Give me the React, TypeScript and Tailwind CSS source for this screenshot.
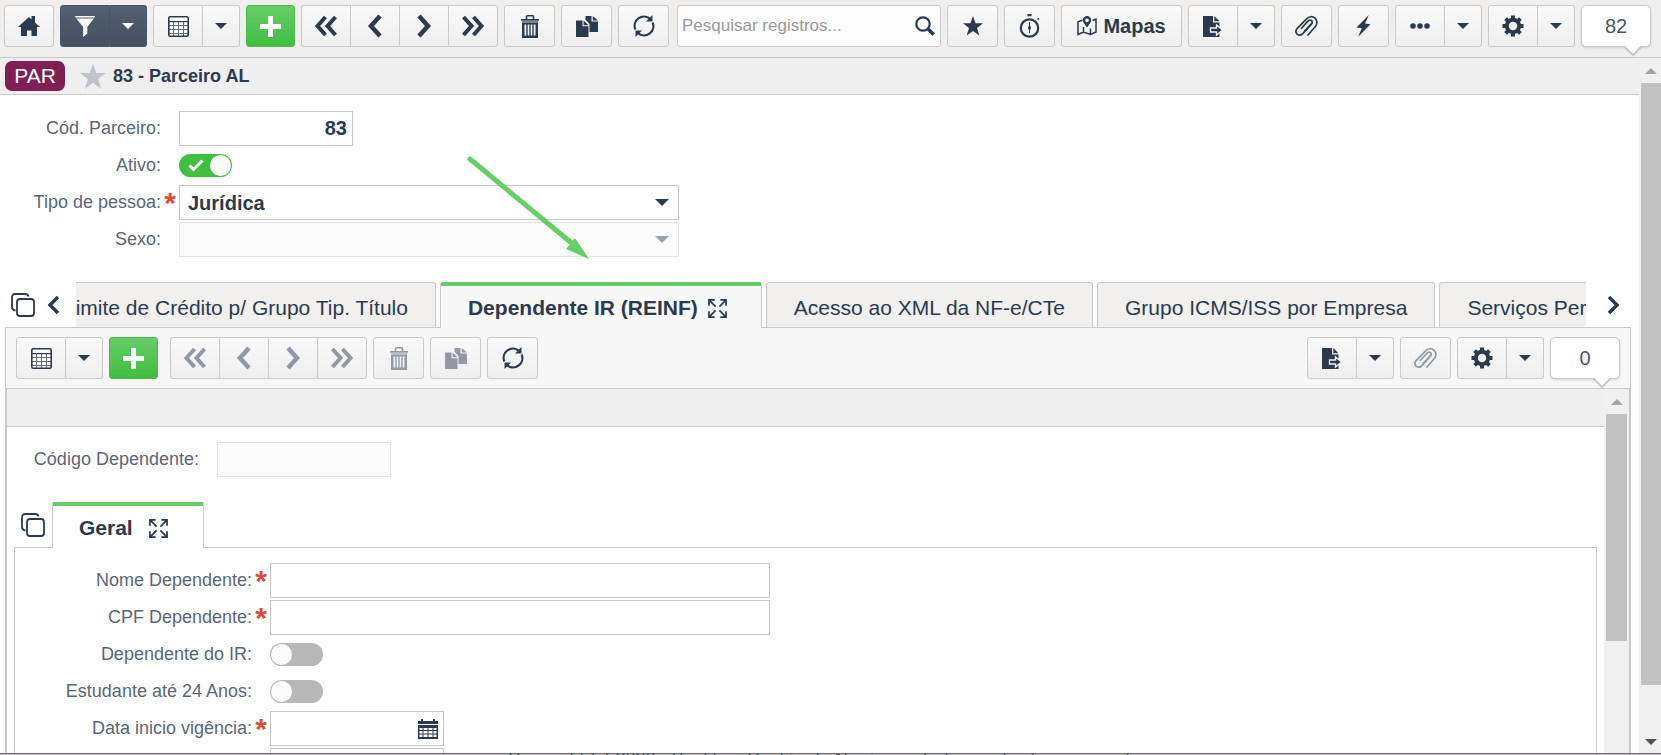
import React, {useState} from 'react';
import clsx from 'clsx';

type Children = {children?: React.ReactNode};

const buttonLook = 'flex h-[42px] items-center justify-center border border-[#c9c9c9] bg-linear-to-b from-[#f9f9f9] to-[#efefef] text-[#2c3a4d] disabled:text-[#9299a5]';

const Svg = ({w, h, children}: {w: number; h: number} & Children) => (
    <svg width={w} height={h} viewBox={`0 0 ${w} ${h}`} fill="currentColor" aria-hidden="true" className="shrink-0">
        {children}
    </svg>
);

const HomeIcon = () => (
    <Svg w={22} h={20}>
        <path d="M11 1l2.500 2.400V0H17v6.500l5 4.500h-3v9h-5.500v-5.500H9V20H3v-9H0z"/>
    </Svg>
);

const FilterIcon = () => (
    <Svg w={20} h={21}>
        <path d="M0 0h20l-.7 1.500H.7zM1.200 2.500h17.600L12.300 11v6.500L8.200 21V11z"/>
    </Svg>
);

const CaretIcon = () => (
    <Svg w={12} h={6}>
        <path d="M0 0h12L6 6z"/>
    </Svg>
);

const GridIcon = () => (
    <Svg w={21} h={21}>
        <rect x=".8" y=".8" width="19.400" height="19.400" rx="1.500" fill="#fff" stroke="currentColor" strokeWidth="1.600"/>
        <path d="M1 5h19v1.200H1z"/>
        <path d="M1 9h19v1H1zM1 13h19v1H1zM1 17h19v1H1zM5 6h1v14H5zM10 6h1v14h-1zM15 6h1v14h-1z" opacity=".75"/>
    </Svg>
);

const PlusIcon = () => (
    <Svg w={21} h={21}>
        <path d="M8 0h5v8h8v5h-8v8H8v-8H0V8h8z"/>
    </Svg>
);

const ChevronIcon = ({right}: {right?: boolean}) => (
    <Svg w={16} h={24}>
        <path d={right ? 'M3 2l9 10-9 10' : 'M13 2L4 12l9 10'} fill="none" stroke="currentColor" strokeWidth="4.500"/>
    </Svg>
);

const DoubleChevronIcon = ({right}: {right?: boolean}) => (
    <Svg w={24} h={22}>
        <path
            d={right ? 'M2.500 2l8 9-8 9M12.500 2l8 9-8 9' : 'M11.500 2l-8 9 8 9M21.500 2l-8 9 8 9'}
            fill="none"
            stroke="currentColor"
            strokeWidth="4"
        />
    </Svg>
);

const TabChevronIcon = ({right}: {right?: boolean}) => (
    <Svg w={12} h={20}>
        <path d={right ? 'M2 2l8 8-8 8' : 'M10 2l-8 8 8 8'} fill="none" stroke="currentColor" strokeWidth="3.500"/>
    </Svg>
);

const TrashIcon = () => (
    <Svg w={18} h={23}>
        <path d="M5.500 4V1.500Q5.500.8 6.200.8h5.600q.7 0 .7.7V4" fill="none" stroke="currentColor" strokeWidth="1.600"/>
        <path d="M0 4h18v1.700H0z"/>
        <path d="M1 6h16v2H1z" opacity=".6"/>
        <path fillRule="evenodd" d="M1 8h16v15H1zM3.500 9.500v11h1.800v-11zM6.700 9.500v11h1.600v-11zM9.700 9.500v11h1.600v-11zM12.700 9.500v11h1.800v-11z"/>
    </Svg>
);

const CopyIcon = () => (
    <Svg w={22} h={21}>
        <path d="M9.500 0h6v5.500H22v10.500h-8.500V8L9.500 3.800zM16.800 0L22 4.400h-5.200z"/>
        <path d="M0 4.500h6.500v5.800h6V21H0zM7.600 4.500l4.900 4.700H7.600z"/>
    </Svg>
);

const RefreshIcon = () => (
    <Svg w={22} h={22}>
        <path d="M2.400 14.500A9.300 9.300 0 0 1 17 3.800M19.600 7.500A9.300 9.300 0 0 1 5 18.200" fill="none" stroke="currentColor" strokeWidth="2.200"/>
        <path d="M19.500 0v6.500H13zM2.500 22v-6.500H9z"/>
    </Svg>
);

const SearchIcon = () => (
    <Svg w={20} h={20}>
        <circle cx="8" cy="8" r="6.700" fill="none" stroke="currentColor" strokeWidth="2.200"/>
        <path d="M12.500 12.500l6.300 6" stroke="currentColor" strokeWidth="3.600"/>
    </Svg>
);

const StarIcon = () => (
    <Svg w={20} h={20}>
        <path d="M10 0l2.600 7.300H20l-6 4.600 2.300 7.600-6.300-4.600-6.300 4.600L6 11.900 0 7.300h7.400z"/>
    </Svg>
);

const TimerIcon = () => (
    <Svg w={22} h={24}>
        <circle cx="10.500" cy="14" r="8.700" fill="none" stroke="currentColor" strokeWidth="2.200"/>
        <path d="M8.500 0h4v2.200h-4zM18.500 4h1.700v1.700h-1.700zM10 8h1v4h-1zM10 16h1v3h-1z"/>
        <path d="M10.500 10l1.600 4-1.600 3-1.600-3z"/>
    </Svg>
);

const MapIcon = () => (
    <Svg w={20} h={20}>
        <path d="M5.500 4.200L1 5.800V18.500L6.500 16l7 2.500L19 16V3.200l-3.500 1.300M6.500 11v5M13.500 12.500v6" fill="none" stroke="currentColor" strokeWidth="1.500"/>
        <path fillRule="evenodd" d="M10 0a4.200 4.200 0 0 1 4.200 4.200c0 2.300-2.200 4.100-4.200 7.300-2-3.200-4.200-5-4.200-7.300A4.200 4.200 0 0 1 10 0zm0 2.400a1.900 1.900 0 1 0 0 3.800 1.900 1.900 0 0 0 0-3.800z"/>
    </Svg>
);

const ExportIcon = () => (
    <Svg w={20} h={21}>
        <path d="M0 0h10v6.500h6.500V21H0zM11.300 0l5.200 5.300h-5.200z"/>
        <path d="M7.500 12h6V9l6 5-6 5v-3h-6z" stroke="#f3f3f3" strokeWidth="1.300"/>
    </Svg>
);

const ClipIcon = () => (
    <svg width="23" height="22" viewBox="0 0 23 22" fill="none" stroke="currentColor" strokeWidth="1.700" strokeLinecap="round" aria-hidden="true">
        <path d="M13 20l7.200-8.200c2.300-2.700 2.100-6.400-.2-8.600-2.400-2.200-6.100-1.900-8.400.6L2.300 13.300c-1.700 1.900-1.600 4.300-.1 5.800 1.600 1.400 4 1.200 5.600-.5l8.600-9.400c1-1.200 1-2.600.1-3.500-1-.9-2.500-.8-3.500.4L6.500 13.300"/>
        <path d="M9.500 16l7-7.500"/>
    </svg>
);

const BoltIcon = () => (
    <Svg w={15} h={22}>
        <path d="M12.800 0L.5 12.500l5.300.8L2 22l12.500-12.800-5.500-.8z"/>
    </Svg>
);

const DotsIcon = () => (
    <Svg w={20} h={6}>
        <circle cx="3" cy="3" r="2.800"/>
        <circle cx="10" cy="3" r="2.800"/>
        <circle cx="17" cy="3" r="2.800"/>
    </Svg>
);

const GearIcon = () => (
    <Svg w={22} h={22}>
        <circle cx="11" cy="11" r="6.200" fill="none" stroke="currentColor" strokeWidth="4"/>
        <path
            d="M11 .5v4M11 17.500v4M.5 11h4M17.500 11h4M3.600 3.600l2.800 2.800M15.600 15.600l2.800 2.800M3.600 18.400l2.800-2.800M15.600 6.400l2.800-2.800"
            stroke="currentColor"
            strokeWidth="4"
        />
    </Svg>
);

const LayersIcon = () => (
    <svg width="24" height="24" viewBox="0 0 24 24" fill="none" stroke="currentColor" strokeWidth="1.800" aria-hidden="true" className="shrink-0">
        <rect x="6" y="6" width="17" height="17" rx="3"/>
        <path d="M4.500 17.500Q1 17 1 14V4.500Q1 1 4.500 1H14q3 0 3.500 2.500"/>
    </svg>
);

const ExpandIcon = () => (
    <svg width="19" height="19" viewBox="0 0 20 20" fill="none" stroke="currentColor" strokeWidth="1.800" aria-hidden="true" className="shrink-0">
        <path d="M1 7V1h6M13 1h6v6M19 13v6h-6M7 19H1v-6M1 1l7 7M19 1l-7 7M19 19l-7-7M1 19l7-7"/>
    </svg>
);

const CalendarIcon = () => (
    <Svg w={20} h={20}>
        <path d="M3 0h2v2h10V0h2v2h3v3H0V2h3z"/>
        <path fillRule="evenodd" d="M0 6h20v14H0zM1.500 9v2h3V9zM5.500 9v2h4V9zM10.500 9v2h4V9zM15.500 9v2h3V9zM1.500 12v2.500h3V12zM5.500 12v2.500h4V12zM10.500 12v2.500h4V12zM15.500 12v2.500h3V12zM1.500 15.500V18h3v-2.500zM5.500 15.500V18h4v-2.500zM10.500 15.500V18h4v-2.500zM15.500 15.500V18h3v-2.500z"/>
    </Svg>
);

const ToolButton = ({label, disabled, children}: {label: string; disabled?: boolean} & Children) => (
    <button type="button" aria-label={label} disabled={disabled} className={clsx(buttonLook, 'w-[51px] shrink-0 rounded-[3px]')}>
        {children}
    </button>
);

const AddButton = () => (
    <button
        type="button"
        aria-label="Adicionar"
        className="flex h-[42px] w-[49px] shrink-0 items-center justify-center rounded-[3px] border border-[#4dbb4d] bg-linear-to-b from-[#66cc66] to-[#40be40] text-white"
    >
        <PlusIcon/>
    </button>
);

const SplitButton = ({label, dark, children}: {label: string; dark?: boolean} & Children) => {
    const look = dark
        ? 'flex h-[42px] items-center justify-center border border-[#4a5565] bg-linear-to-b from-[#536073] to-[#455060] text-white'
        : buttonLook;

    return (
        <div className="flex shrink-0">
            <button type="button" aria-label={label} className={clsx(look, 'w-[50px] rounded-l-[3px]')}>
                {children}
            </button>
            <button type="button" aria-label={label + ' (opções)'} className={clsx(look, 'w-[37px] rounded-r-[3px] border-l-0')}>
                <CaretIcon/>
            </button>
        </div>
    );
};

const Pager = ({disabled}: {disabled?: boolean}) => {
    const cell = 'w-[49px] border-r-0';

    return (
        <div className="flex shrink-0">
            <button type="button" aria-label="Primeiro" disabled={disabled} className={clsx(buttonLook, cell, 'rounded-l-[3px]')}>
                <DoubleChevronIcon/>
            </button>
            <button type="button" aria-label="Anterior" disabled={disabled} className={clsx(buttonLook, cell)}>
                <ChevronIcon/>
            </button>
            <button type="button" aria-label="Próximo" disabled={disabled} className={clsx(buttonLook, cell)}>
                <ChevronIcon right/>
            </button>
            <button type="button" aria-label="Último" disabled={disabled} className={clsx(buttonLook, 'w-[50px] rounded-r-[3px]')}>
                <DoubleChevronIcon right/>
            </button>
        </div>
    );
};

const Counter = ({value}: {value: number}) => (
    <div className="relative flex h-[42px] w-[70px] shrink-0 items-center justify-center rounded-[5px] border border-[#c9c9c9] bg-white text-[20px] text-[#4a5669] shadow-sm">
        {value}
        <svg width="18" height="11" viewBox="0 0 18 11" className="absolute top-full right-2" aria-hidden="true">
            <path d="M0 0l9 9 9-9" fill="#fff" stroke="#c9c9c9" strokeWidth="2"/>
            <path d="M1 -1h16L9 7.500z" fill="#fff"/>
        </svg>
    </div>
);

const Field = ({id, label, required, wide, children}: {id: string; label: string; required?: boolean; wide: string} & Children) => (
    <div className="flex h-[35px] items-center">
        <label htmlFor={id} className={clsx(wide, 'shrink-0 text-right text-[18px] text-[#5b6678]')}>{label}</label>
        <span className="flex h-[35px] w-[18px] shrink-0 justify-center pt-1 text-[30px] leading-[28px] font-bold text-[#dd4b39]" aria-hidden="true">
            {required && '*'}
        </span>
        {children}
    </div>
);

const inputLook = 'h-[35px] border border-[#c8c8c8] bg-white px-[5px] text-[20px] font-bold text-[#2c3a4d] outline-none disabled:border-[#e3e3e3] disabled:bg-[#fbfbfb]';

const SelectBox = ({id, value, disabled}: {id: string; value: string; disabled?: boolean}) => (
    <div className={clsx('relative w-[500px]', disabled ? 'text-[#9aa1ad]' : 'text-[#2c3a4d]')}>
        <select id={id} disabled={disabled} defaultValue={value} className={clsx(inputLook, 'w-full appearance-none indent-[3px] opacity-100')}>
            <option>{value}</option>
        </select>
        <span className="pointer-events-none absolute inset-y-0 right-[10px] flex items-center">
            <Svg w={14} h={7}>
                <path d="M0 0h14L7 7z"/>
            </Svg>
        </span>
    </div>
);

const Toggle = ({id, initial}: {id: string; initial?: boolean}) => {
    const [on, setOn] = useState(!!initial);

    return (
        <span className="relative flex h-[23px] w-[53px]">
            <input
                id={id}
                type="checkbox"
                role="switch"
                checked={on}
                onChange={() => setOn(!on)}
                className="h-full w-full cursor-pointer appearance-none rounded-full bg-[#b8b8b8] checked:bg-[#40bf40]"
            />
            <span className={clsx('pointer-events-none absolute inset-y-px size-[21px] rounded-full bg-[#fbfbfb]', on ? 'right-px' : 'left-px')}/>
            {on && (
                <svg width="16" height="13" viewBox="0 0 16 13" className="pointer-events-none absolute top-[5px] left-[9px]" aria-hidden="true">
                    <path d="M1.500 6.500l4 4L14.500 1.500" fill="none" stroke="#fff" strokeWidth="3"/>
                </svg>
            )}
        </span>
    );
};

const DateBox = ({id}: {id: string}) => (
    <div className="flex h-[35px] w-[174px] items-center border border-[#c8c8c8] bg-white pr-[5px]">
        <input id={id} type="text" className="h-full w-full min-w-0 px-[5px] text-[20px] font-bold text-[#2c3a4d] outline-none"/>
        <button type="button" aria-label="Abrir calendário" className="text-[#2c3a4d]">
            <CalendarIcon/>
        </button>
    </div>
);

const Tab = ({label, active, className}: {label: string; active?: boolean; className?: string}) => (
    <button
        type="button"
        role="tab"
        aria-selected={!!active}
        className={clsx(
            'flex shrink-0 items-center rounded-t-[3px] border-x border-[#c9c9c9] text-[21px] whitespace-nowrap text-[#2c3a4d]',
            active ? 'h-[46px] border-t-4 border-t-[#66cc66] pt-0.5 font-bold' : 'h-[45px] border-t bg-[#f1f0ef] px-[27px] pt-[5px]',
            className
        )}
    >
        {label}
        {active && <ExpandIcon/>}
    </button>
);

const ScrollRail = ({end, thumb, rest, className}: {end?: boolean; thumb: string; rest: string; className?: string}) => (
    <div className={clsx('flex shrink-0 flex-col bg-[#f0f0f0]', className)} aria-hidden="true">
        <div className="flex h-[25px] shrink-0 items-center justify-center text-[#a3a3a3]">
            <Svg w={12} h={6}>
                <path d="M0 6h12L6 0z"/>
            </Svg>
        </div>
        <div className={clsx('bg-[#c1c1c1]', thumb)}/>
        <div className={rest}/>
        {end && (
            <div className="flex h-[23px] shrink-0 items-center justify-center text-[#505050]">
                <CaretIcon/>
            </div>
        )}
    </div>
);

const MainToolbar = () => (
    <header className="flex h-[58px] shrink-0 items-start gap-1.5 border-b border-[#c9c9c9] bg-[#f0efee] pt-[5px] pr-[10px] pl-1">
        <button type="button" aria-label="Início" className={clsx(buttonLook, 'w-[50px] shrink-0 rounded-[3px]')}>
            <HomeIcon/>
        </button>
        <SplitButton label="Filtro" dark><FilterIcon/></SplitButton>
        <SplitButton label="Modo grade"><GridIcon/></SplitButton>
        <AddButton/>
        <Pager/>
        <ToolButton label="Excluir"><TrashIcon/></ToolButton>
        <ToolButton label="Duplicar"><CopyIcon/></ToolButton>
        <ToolButton label="Atualizar"><RefreshIcon/></ToolButton>
        <div className="ml-0.5 flex h-[42px] min-w-0 flex-1 items-center rounded-[3px] border border-[#c9c9c9] bg-[#fdfdfd] pr-[5px]">
            <input
                type="search"
                aria-label="Pesquisar registros"
                placeholder="Pesquisar registros..."
                className="h-full min-w-0 flex-1 pl-1 text-[17px] text-[#2c3a4d] outline-none placeholder:text-[#999]"
            />
            <button type="button" aria-label="Pesquisar" className="text-[#2c3a4d]">
                <SearchIcon/>
            </button>
        </div>
        <ToolButton label="Favorito"><StarIcon/></ToolButton>
        <ToolButton label="Cronômetro"><TimerIcon/></ToolButton>
        <button type="button" className={clsx(buttonLook, 'w-[121px] shrink-0 gap-1.5 rounded-[3px] text-[20px] font-bold')}>
            <MapIcon/>
            Mapas
        </button>
        <SplitButton label="Exportar"><ExportIcon/></SplitButton>
        <ToolButton label="Anexos"><ClipIcon/></ToolButton>
        <ToolButton label="Ações"><BoltIcon/></ToolButton>
        <SplitButton label="Mais"><DotsIcon/></SplitButton>
        <SplitButton label="Configurações"><GearIcon/></SplitButton>
        <Counter value={82}/>
    </header>
);

const DetailToolbar = () => (
    <div className="flex h-[61px] shrink-0 items-start justify-between border-b border-[#c9c9c9] bg-[#f7f7f7] px-[10px] pt-[9px]">
        <div className="flex gap-1.5">
            <SplitButton label="Modo grade"><GridIcon/></SplitButton>
            <AddButton/>
            <div className="ml-1.5">
                <Pager disabled/>
            </div>
            <ToolButton label="Excluir" disabled><TrashIcon/></ToolButton>
            <ToolButton label="Duplicar" disabled><CopyIcon/></ToolButton>
            <ToolButton label="Atualizar"><RefreshIcon/></ToolButton>
        </div>
        <div className="flex gap-1.5">
            <SplitButton label="Exportar"><ExportIcon/></SplitButton>
            <ToolButton label="Anexos" disabled><ClipIcon/></ToolButton>
            <SplitButton label="Configurações"><GearIcon/></SplitButton>
            <Counter value={0}/>
        </div>
    </div>
);

const PartnerForm = () => (
    <form className="relative flex shrink-0 flex-col gap-0.5 pt-4 pb-[25px]">
        <Field id="codigo" label="Cód. Parceiro:" wide="w-[161px]">
            <input id="codigo" type="text" defaultValue="83" className={clsx(inputLook, 'w-[174px] text-right')}/>
        </Field>
        <Field id="ativo" label="Ativo:" wide="w-[161px]">
            <Toggle id="ativo" initial/>
        </Field>
        <Field id="tipo" label="Tipo de pessoa:" wide="w-[161px]" required>
            <SelectBox id="tipo" value="Jurídica"/>
        </Field>
        <Field id="sexo" label="Sexo:" wide="w-[161px]">
            <SelectBox id="sexo" value="" disabled/>
        </Field>

        <svg width="124" height="106" viewBox="0 0 124 106" className="pointer-events-none absolute top-[60px] left-[466px]" aria-hidden="true">
            <path d="M4 4l104 86" stroke="#66cf66" strokeWidth="5" strokeLinecap="round"/>
            <path d="M109 83l14 21-23-10z" fill="#66cf66"/>
        </svg>
    </form>
);

const DependentForm = () => (
    <div className="flex min-w-0 flex-1 flex-col overflow-hidden bg-white">
        <div className="h-[38px] shrink-0 border-b border-[#c9c9c9] bg-[#efefef]"/>
        <div className="shrink-0 pt-[15px] pb-[25px]">
            <Field id="codigoDependente" label="Código Dependente:" wide="w-[192px]">
                <input id="codigoDependente" type="text" disabled className={clsx(inputLook, 'w-[174px]')}/>
            </Field>
        </div>
        <div className="flex shrink-0 items-center pl-[14px]" role="tablist">
            <button type="button" aria-label="Abas" className="mr-[7px] text-[#2c3a4d]">
                <LayersIcon/>
            </button>
            <Tab label="Geral" active className="z-10 -mb-px w-[152px] gap-4 bg-white pl-[26px]"/>
        </div>
        <form className="mx-[7px] flex flex-1 shrink-0 flex-col gap-0.5 border border-b-0 border-[#c9c9c9] pt-[15px]">
            <Field id="nome" label="Nome Dependente:" wide="w-[237px]" required>
                <input id="nome" type="text" className={clsx(inputLook, 'w-[500px]')}/>
            </Field>
            <Field id="cpf" label="CPF Dependente:" wide="w-[237px]" required>
                <input id="cpf" type="text" className={clsx(inputLook, 'w-[500px]')}/>
            </Field>
            <Field id="ir" label="Dependente do IR:" wide="w-[237px]">
                <Toggle id="ir"/>
            </Field>
            <Field id="estudante" label="Estudante até 24 Anos:" wide="w-[237px]">
                <Toggle id="estudante"/>
            </Field>
            <Field id="inicio" label="Data inicio vigência:" wide="w-[237px]" required>
                <DateBox id="inicio"/>
            </Field>
            <Field id="fim" label="Data fim vigência:" wide="w-[237px]">
                <DateBox id="fim"/>
            </Field>
        </form>
    </div>
);

const App = () => {
    return (
        <div className="flex h-screen flex-col overflow-hidden bg-white font-['Liberation_Sans',Arial,sans-serif]">
            <MainToolbar/>

            <div className="flex min-h-0 flex-1">
                <main className="flex min-w-0 flex-1 flex-col overflow-hidden">
                    <div className="flex h-[37px] shrink-0 items-center border-b border-[#c9c9c9] bg-[#efefef] pl-[5px] text-[#2c3a4d]">
                        <span className="flex h-[30px] w-[60px] items-center justify-center rounded-[7px] bg-[#7f1f52] text-[21px] text-white">PAR</span>
                        <button type="button" aria-label="Favoritar" className="ml-[15px] text-[#bfc3ca]">
                            <svg width="26" height="25" viewBox="0 0 20 19.500" fill="currentColor" aria-hidden="true">
                                <path d="M10 0l2.600 7.100H20l-6 4.600 2.300 7.600-6.300-4.600-6.300 4.600L6 11.700 0 7.100h7.400z"/>
                            </svg>
                        </button>
                        <h1 className="ml-[7px] text-[18px] font-bold">83 - Parceiro AL</h1>
                    </div>

                    <PartnerForm/>

                    <div className="flex shrink-0 items-center pl-[11px] text-[#2c3a4d]">
                        <button type="button" aria-label="Abas"><LayersIcon/></button>
                        <button type="button" aria-label="Abas anteriores" className="mr-4 ml-[13px]"><TabChevronIcon/></button>
                        <div role="tablist" className="z-10 -mb-px flex min-w-0 flex-1 gap-1 overflow-hidden">
                            <Tab label="Limite de Crédito p/ Grupo Tip. Título" className="-ml-10"/>
                            <Tab label="Dependente IR (REINF)" active className="gap-[10px] bg-[#f7f7f7] pr-[34px] pl-[27px]"/>
                            <Tab label="Acesso ao XML da NF-e/CTe"/>
                            <Tab label="Grupo ICMS/ISS por Empresa"/>
                            <Tab label="Serviços Permitidos"/>
                        </div>
                        <button type="button" aria-label="Próximas abas" className="mr-5 ml-[21px]"><TabChevronIcon right/></button>
                    </div>

                    <section className="mr-2 ml-[5px] flex min-h-0 flex-1 flex-col border border-b-0 border-[#c9c9c9]">
                        <DetailToolbar/>
                        <div className="flex min-h-0 flex-1 border-x border-[#c9c9c9]">
                            <DependentForm/>
                            <ScrollRail className="w-[25px] px-0.5" thumb="flex-[227]" rest="flex-[112]"/>
                        </div>
                    </section>
                </main>
                <ScrollRail end className="w-[22px] pl-0.5" thumb="flex-[602]" rest="flex-[45]"/>
            </div>

            <footer className="h-0.5 shrink-0 overflow-hidden border-t border-[#6b6b6b] bg-[#c4c2c4] text-center text-[18px] leading-[10px] text-[#2c3a4d]">
                Copyright (c) 2020 - Sankhya Gestão de Negócios. Todos os direitos reservados.
            </footer>
        </div>
    );
};

export default App;
